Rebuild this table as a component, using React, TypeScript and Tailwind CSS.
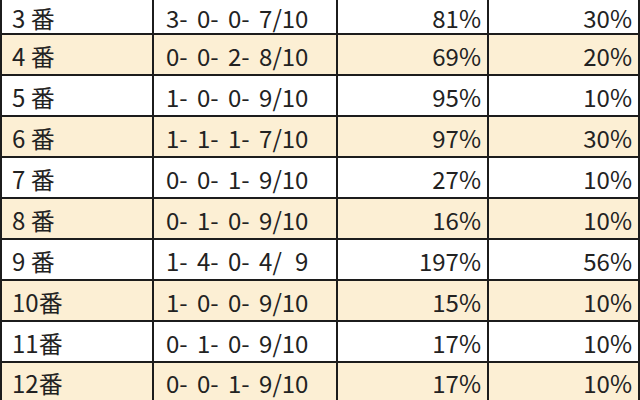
import React from 'react';

interface Row {
  no: string;
  record: string;
  rate: string;
  ratio: string;
}

// figure space keeps "4/ 9" aligned with the two-digit denominators
const rows: Row[] = [
  { no: '3 番', record: '3- 0- 0- 7/10', rate: '81%', ratio: '30%' },
  { no: '4 番', record: '0- 0- 2- 8/10', rate: '69%', ratio: '20%' },
  { no: '5 番', record: '1- 0- 0- 9/10', rate: '95%', ratio: '10%' },
  { no: '6 番', record: '1- 1- 1- 7/10', rate: '97%', ratio: '30%' },
  { no: '7 番', record: '0- 0- 1- 9/10', rate: '27%', ratio: '10%' },
  { no: '8 番', record: '0- 1- 0- 9/10', rate: '16%', ratio: '10%' },
  { no: '9 番', record: '1- 4- 0- 4/\u20079', rate: '197%', ratio: '56%' },
  { no: '10番', record: '1- 0- 0- 9/10', rate: '15%', ratio: '10%' },
  { no: '11番', record: '0- 1- 0- 9/10', rate: '17%', ratio: '10%' },
  { no: '12番', record: '0- 0- 1- 9/10', rate: '17%', ratio: '10%' },
];

export default function App() {
  const last = rows.length - 1;
  return (
    <div className="w-[640px] h-[400px] overflow-hidden bg-white">
      <table
        className="table-fixed border-collapse text-[24px] font-normal text-[#222] w-[638px]"
        style={{ fontFamily: '"Noto Sans CJK JP", "Noto Sans", sans-serif' }}
      >
        <colgroup>
          <col className="w-[152px]" />
          <col className="w-[184px]" />
          <col className="w-[151px]" />
          <col className="w-[151px]" />
        </colgroup>
        <tbody>
          {rows.map((r, i) => {
            // first and last rows are cropped by the screenshot edge
            const rowCls = i === 0 ? 'h-[34px]' : i === last ? 'h-[38px]' : 'h-[41px]';
            const cellCls =
              i === 0
                ? 'border-2 border-t-0 border-[#1c1c1c] pt-[3px] leading-none'
                : i === last
                ? 'border-2 border-b-0 border-[#1c1c1c] pt-[3px] leading-none'
                : 'border-2 border-[#1c1c1c] pt-[3px] leading-none';
            return (
              <tr key={r.no} className={`${rowCls} ${i % 2 === 1 ? 'bg-[#fcefd4]' : 'bg-white'}`}>
                <td className={`${cellCls} pl-[10px] whitespace-pre`}>{r.no}</td>
                <td className={`${cellCls} pl-[12px] whitespace-pre [word-spacing:4px]`}>{r.record}</td>
                <td className={`${cellCls} pr-[6px] text-right`}>{r.rate}</td>
                <td className={`${cellCls} pr-[6px] text-right`}>{r.ratio}</td>
              </tr>
            );
          })}
        </tbody>
      </table>
    </div>
  );
}
